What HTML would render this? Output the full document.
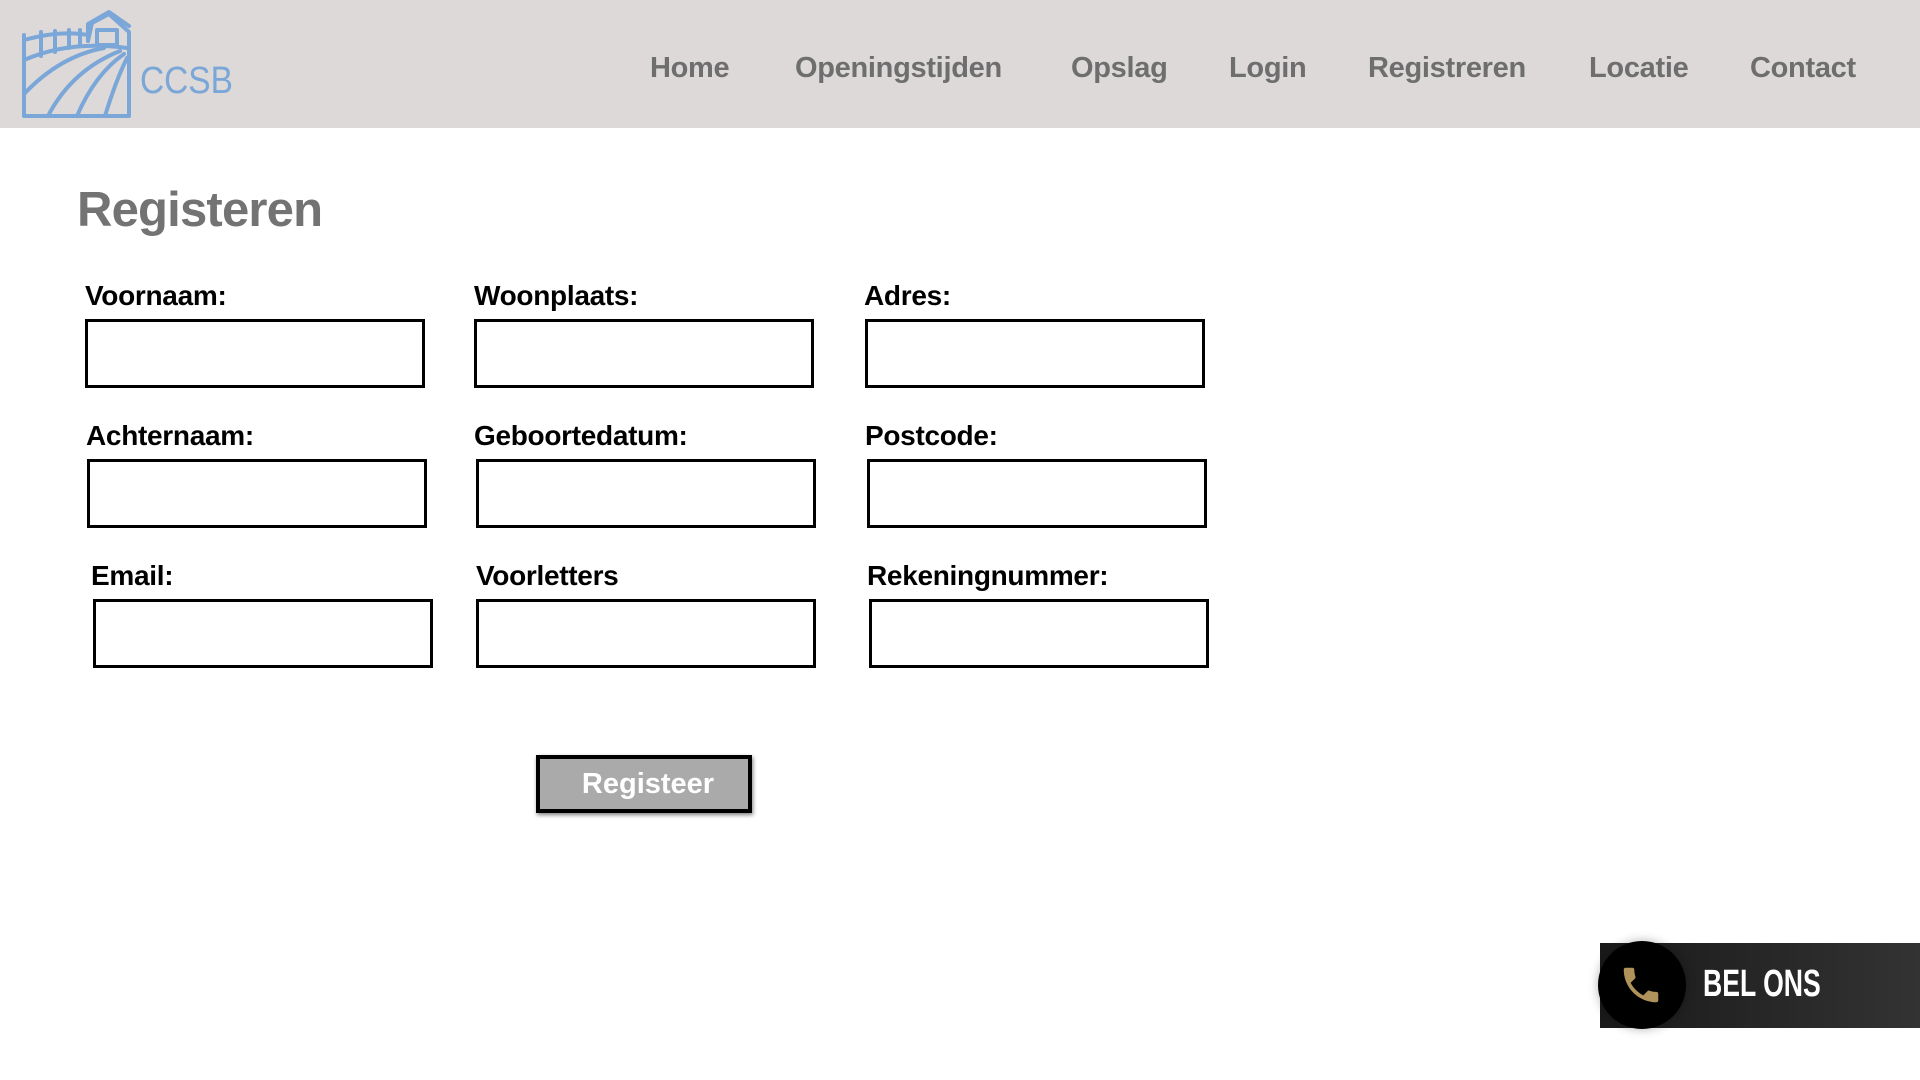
<!DOCTYPE html>
<html><head><meta charset="utf-8"><style>
*{margin:0;padding:0;box-sizing:border-box}
body{width:1920px;height:1080px;background:#fff;position:relative;overflow:hidden;font-family:"Liberation Sans",sans-serif}
.hdr{position:absolute;left:0;top:0;width:1920px;height:128px;background:#dcd9d8}
.nav{position:absolute;top:52px;font-size:29px;font-weight:bold;color:#6e6e6e;letter-spacing:-0.3px}
h1{position:absolute;left:77px;top:182px;font-size:49px;color:#737373;font-weight:bold;letter-spacing:-0.8px}
.lb{position:absolute;font-size:28px;font-weight:bold;color:#000;letter-spacing:-0.3px}
.in{position:absolute;width:340px;height:69px;border:3px solid #000;background:#fff}
.btn{position:absolute;left:536px;top:755px;width:216px;height:58px;background:#aaa;border:4px solid #000;box-shadow:1px 2px 4px rgba(0,0,0,.5);color:#fff;font-weight:bold;font-size:29px;text-align:center;line-height:50px;padding-left:8px}
</style></head><body>
<div class="hdr">
<svg style="position:absolute;left:20px;top:8px" width="112" height="112" viewBox="0 0 112 112" fill="none" stroke="#7aa6d8" stroke-width="4" stroke-linecap="round" stroke-linejoin="round">
<path d="M4 27 V108 H109 V24 L89 6 L72 15 L68 33 V27"/>
<path d="M68 33 V16 L89 4 L109 18"/>
<rect x="77" y="22" width="20" height="15"/>
<path d="M4 32 Q40 22 68 27"/>
<path d="M21 24 V48 M35 23 V44 M49 22 V40 M60 22 V36"/>
<path d="M4 52 Q50 32 107 40"/>
<path d="M4 86 Q40 48 84 40"/>
<path d="M28 108 Q52 62 100 43"/>
<path d="M57 108 Q75 66 104 46"/>
<path d="M85 108 Q96 72 107 50"/>
</svg>
<div style="position:absolute;left:140px;top:60px;font-size:38px;color:#7aa6d8;transform:scaleX(.88);transform-origin:left">CCSB</div>
<div class="nav" style="left:650px">Home</div>
<div class="nav" style="left:795px">Openingstijden</div>
<div class="nav" style="left:1071px">Opslag</div>
<div class="nav" style="left:1229px">Login</div>
<div class="nav" style="left:1368px">Registreren</div>
<div class="nav" style="left:1589px">Locatie</div>
<div class="nav" style="left:1750px">Contact</div>
</div>
<h1>Registeren</h1>
<div class="lb" style="left:85px;top:280px">Voornaam:</div>
<div class="lb" style="left:474px;top:280px">Woonplaats:</div>
<div class="lb" style="left:864px;top:280px">Adres:</div>
<div class="in" style="left:85px;top:319px"></div>
<div class="in" style="left:474px;top:319px"></div>
<div class="in" style="left:865px;top:319px"></div>
<div class="lb" style="left:86px;top:420px">Achternaam:</div>
<div class="lb" style="left:474px;top:420px">Geboortedatum:</div>
<div class="lb" style="left:865px;top:420px">Postcode:</div>
<div class="in" style="left:87px;top:459px"></div>
<div class="in" style="left:476px;top:459px"></div>
<div class="in" style="left:867px;top:459px"></div>
<div class="lb" style="left:91px;top:560px">Email:</div>
<div class="lb" style="left:476px;top:560px">Voorletters</div>
<div class="lb" style="left:867px;top:560px">Rekeningnummer:</div>
<div class="in" style="left:93px;top:599px"></div>
<div class="in" style="left:476px;top:599px"></div>
<div class="in" style="left:869px;top:599px"></div>
<div class="btn">Registeer</div>
<div style="position:absolute;left:1600px;top:943px;width:320px;height:85px;background:linear-gradient(90deg,#1a1a1a,#333);"></div>
<div style="position:absolute;left:1598px;top:941px;width:88px;height:88px;border-radius:50%;background:#000;box-shadow:0 0 10px rgba(0,0,0,.3)"></div>
<svg style="position:absolute;left:1618px;top:962px" width="46" height="46" viewBox="0 0 24 24"><path fill="#b0935a" d="M6.6 10.8c1.4 2.8 3.8 5.1 6.6 6.6l2.2-2.2c.3-.3.7-.4 1-.2 1.1.4 2.3.6 3.6.6.6 0 1 .4 1 1V20c0 .6-.4 1-1 1C10.6 21 3 13.4 3 4c0-.6.4-1 1-1h3.5c.6 0 1 .4 1 1 0 1.3.2 2.5.6 3.6.1.3 0 .7-.2 1L6.6 10.8z"/></svg>
<div style="position:absolute;left:1703px;top:963px;font-size:38px;font-weight:bold;color:#fff;transform:scaleX(.7);transform-origin:left;font-family:'Liberation Sans Narrow','Liberation Sans',sans-serif">BEL ONS</div>
</body></html>
